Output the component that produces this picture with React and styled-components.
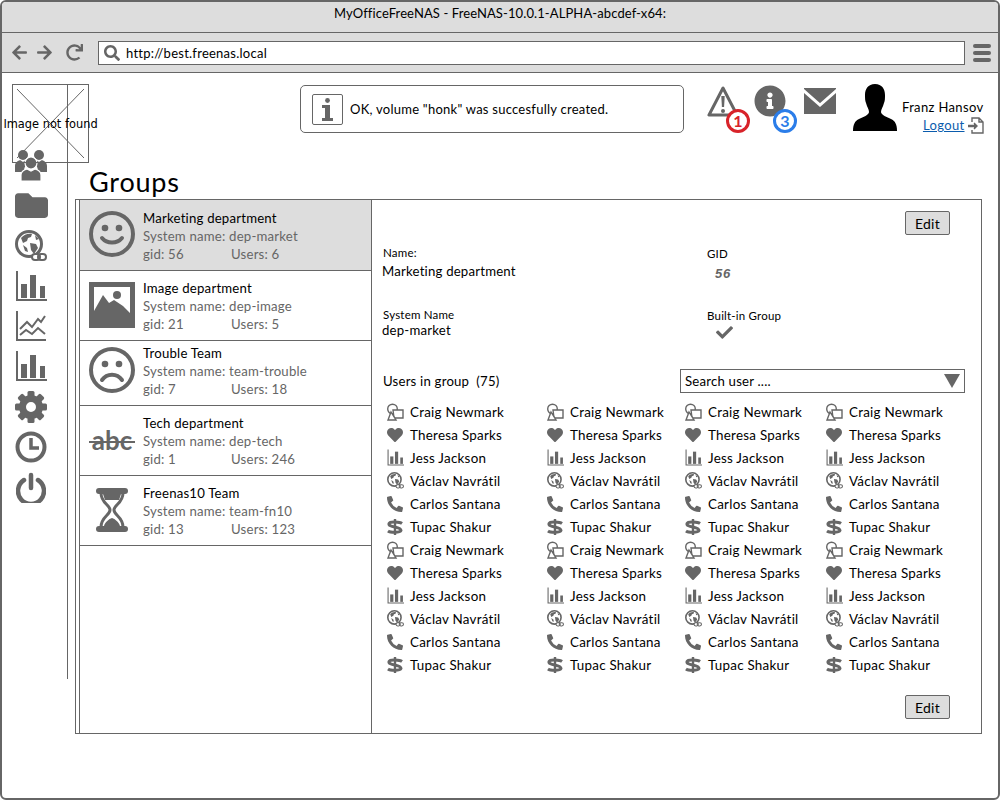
import styled, { createGlobalStyle } from 'styled-components'
import { FaArrowLeft, FaArrowRight, FaCheck, FaFolder, FaHeart, FaInfoCircle, FaPhoneAlt, FaRedo, FaSearch } from 'react-icons/fa'

const GRAY = '#666'
const FONT = '"Lato", "Liberation Sans", sans-serif'

const GlobalStyle = createGlobalStyle`
   html, body {
      margin: 0;
      padding: 0;
      background: #fff;
   }
   body {
      font-family: ${FONT};
      color: #000;
   }
`

const Frame = styled.div`
   box-sizing: border-box;
   width: 1000px;
   height: 800px;
   border: 2px solid ${GRAY};
   border-radius: 6px;
   display: flex;
   flex-direction: column;
   overflow: hidden;
`
const TitleBar = styled.div`
   height: 27px;
   padding-top: 3px;
   background: #ddd;
   border-bottom: 1px solid ${GRAY};
   font-size: 13px;
   letter-spacing: 0.1px;
   line-height: 17px;
   text-align: center;
`
const ToolBar = styled.div`
   height: 39px;
   background: #ddd;
   border-bottom: 1px solid ${GRAY};
   display: flex;
   align-items: center;
   color: ${GRAY};
`
const NavBtn = styled.span`
   display: flex;
   margin-left: ${p => p.$left}px;
   font-size: 17px;
`
const Address = styled.div`
   box-sizing: border-box;
   width: 867px;
   height: 24px;
   margin-left: 15px;
   background: #fff;
   border: 1px solid ${GRAY};
   display: flex;
   align-items: center;
   gap: 6px;
   padding-left: 5px;
   font-size: 13px;
   color: #000;
   letter-spacing: 0.25px;
   svg {
      color: ${GRAY};
      font-size: 16px;
   }
`
const Burger = styled.div`
   margin-left: 8px;
   width: 18px;
   display: flex;
   flex-direction: column;
   gap: 3px;
   i {
      display: block;
      height: 4px;
      border-radius: 2px;
      background: ${GRAY};
   }
`
const Content = styled.div`
   position: relative;
   flex: 1;
   display: flex;
   align-items: flex-start;
`
const Logo = styled.div`
   position: absolute;
   left: 10px;
   top: 11px;
   box-sizing: border-box;
   width: 77px;
   height: 79px;
   border: 1px solid ${GRAY};
   display: flex;
   align-items: center;
   justify-content: center;
   white-space: nowrap;
   font-family: "DejaVu Sans", sans-serif;
   font-size: 11.4px;
   svg {
      position: absolute;
      inset: 4px;
      width: 67px;
      height: 69px;
   }
   span {
      position: relative;
   }
`
const SideBar = styled.nav`
   box-sizing: border-box;
   width: 66px;
   height: 595px;
   margin-top: 11px;
   border-right: 1px solid ${GRAY};
   padding-top: 61px;
   display: grid;
   grid-auto-rows: 40.25px;
   align-content: start;
`
const SideItem = styled.div`
   width: 58px;
   display: flex;
   align-items: center;
   justify-content: center;
   color: ${GRAY};
   font-size: ${p => p.$size || 32}px;
`
const Main = styled.div`
   flex: 1;
   min-width: 0;
`
const Header = styled.header`
   height: 59px;
   padding-top: 12px;
   display: flex;
   align-items: flex-start;
`
const Notice = styled.div`
   box-sizing: border-box;
   width: 384px;
   height: 48px;
   margin-left: 232px;
   border: 1px solid ${GRAY};
   border-radius: 5px;
   display: flex;
   align-items: center;
   gap: 7px;
   padding-left: 11px;
   font-size: 13px;
   letter-spacing: 0.25px;
`
const Badged = styled.div`
   position: relative;
   margin-left: ${p => p.$left}px;
   margin-top: ${p => p.$top || 0}px;
   width: 32px;
   height: 34px;
   color: ${GRAY};
`
const Badge = styled.span`
   position: absolute;
   left: ${p => p.$left}px;
   top: 24px;
   box-sizing: border-box;
   width: 24px;
   height: 24px;
   border-radius: 50%;
   border: 3px solid ${p => p.$color};
   background: #fff;
   color: ${p => p.$color};
   font-size: 16px;
   font-weight: 700;
   line-height: 18px;
   text-align: center;
`
const Avatar = styled.svg`
   margin-left: 16px;
   margin-top: -1px;
   width: 46px;
   height: 47px;
   flex: none;
`
const UserBox = styled.div`
   margin-left: 4px;
   padding-top: 13px;
   white-space: nowrap;
   text-align: right;
   font-size: 13px;
   letter-spacing: 0.35px;
   line-height: 18px;
`
const LogoutRow = styled.div`
   display: flex;
   justify-content: flex-end;
   align-items: center;
   gap: 3px;
   a {
      color: #0b5cad;
      text-decoration: underline;
   }
`
const PageTitle = styled.h1`
   margin: 0 0 0 21px;
   height: 34px;
   padding-top: 21px;
   font-size: 27px;
   font-weight: 400;
   letter-spacing: 0.8px;
   line-height: 34px;
`
const Panel = styled.section`
   box-sizing: border-box;
   width: 907px;
   height: 535px;
   margin-left: 7px;
   border: 1px solid ${GRAY};
   padding-left: 3px;
   display: flex;
`
const GroupList = styled.div`
   box-sizing: border-box;
   width: 293px;
   border-left: 1px solid ${GRAY};
   border-right: 1px solid ${GRAY};
`
const GroupRow = styled.div`
   box-sizing: border-box;
   height: ${p => p.$height}px;
   padding-top: ${p => p.$top}px;
   padding-left: 63px;
   position: relative;
   background: ${p => (p.$active ? '#ddd' : '#fff')};
   border-bottom: 1px solid ${GRAY};
   font-size: 13.2px;
   line-height: 18px;
   letter-spacing: 0.2px;
`
const GroupIcon = styled.div`
   position: absolute;
   left: 9px;
   top: ${p => p.$top}px;
   width: 46px;
   height: 46px;
   display: flex;
   align-items: center;
   justify-content: center;
   color: ${GRAY};
`
const StruckText = styled.span`
   position: relative;
   width: 46px;
   text-align: center;
   font-size: 26px;
   font-weight: 700;
   letter-spacing: 0;
   &::after {
      content: '';
      position: absolute;
      left: 0;
      right: 0;
      top: 50%;
      height: 2px;
      margin-top: 1px;
      background: ${GRAY};
   }
`
const Muted = styled.div`
   color: ${GRAY};
`
const Stats = styled.div`
   display: flex;
   color: ${GRAY};
   span:first-child {
      width: 88px;
   }
`
const Detail = styled.div`
   flex: 1;
   padding: 11px 16px 0 11px;
`
const EditRow = styled.div`
   display: flex;
   justify-content: flex-end;
   padding-right: 15px;
   margin-top: ${p => p.$top || 0}px;
`
const EditBtn = styled.button`
   box-sizing: border-box;
   width: 45px;
   height: 24px;
   padding: 0;
   background: #ddd;
   border: 1px solid ${GRAY};
   border-radius: 2px;
   font-family: ${FONT};
   font-size: 14px;
   letter-spacing: 0.3px;
   color: #000;
`
const Fields = styled.div`
   display: grid;
   grid-template-columns: 324px 1fr;
   grid-auto-rows: 62px;
   margin-top: 11px;
`
const Field = styled.div`
   padding-top: ${p => p.$top || 0}px;
   font-size: 13.2px;
   letter-spacing: 0.2px;
`
const FieldLabel = styled.div`
   font-size: 11.5px;
   line-height: 14px;
   letter-spacing: 0.2px;
`
const FieldValue = styled.div`
   line-height: 19px;
   margin-left: -1px;
   margin-top: ${p => p.$top || 0}px;
`
const GidValue = styled.div`
   margin: 5px 0 0 8px;
   font-family: "Liberation Sans", sans-serif;
   font-style: italic;
   font-weight: 700;
   font-size: 13px;
   letter-spacing: 0.8px;
   color: ${GRAY};
`
const CheckMark = styled.div`
   margin: 1px 0 0 9px;
   font-size: 17px;
   color: ${GRAY};
   line-height: 18px;
`
const UsersHead = styled.div`
   display: flex;
   align-items: center;
   justify-content: space-between;
   margin-top: -1px;
   font-size: 13.2px;
   letter-spacing: 0.2px;
`
const Search = styled.div`
   box-sizing: border-box;
   width: 285px;
   height: 24px;
   border: 1px solid ${GRAY};
   display: flex;
   align-items: center;
   justify-content: space-between;
   padding: 0 4px;
`
const Arrow = styled.i`
   width: 0;
   height: 0;
   border-left: 8px solid transparent;
   border-right: 8px solid transparent;
   border-top: 14px solid ${GRAY};
`
const UserGrid = styled.div`
   display: grid;
   grid-template-columns: 160px 138px 141px 1fr;
   grid-auto-rows: 23px;
   margin: 7px 0 0 3px;
`
const UserCell = styled.div`
   display: flex;
   align-items: center;
   gap: 6px;
   font-size: 13.4px;
   letter-spacing: 0.25px;
   white-space: nowrap;
`
const UserIcon = styled.span`
   width: 18px;
   height: 18px;
   display: flex;
   align-items: center;
   justify-content: center;
   color: ${GRAY};
   font-size: 16px;
`

const People = () => (
   <svg width="32" height="33" viewBox="0 0 32 33" fill="currentColor">
      <circle cx="8" cy="6" r="5" />
      <circle cx="24" cy="6" r="5" />
      <path d="M0 23v-6c0-4 3-5 5-6l3 2 3-2 3 2c-3 2-5 5-5 10zM32 23v-6c0-4-3-5-5-6l-3 2-3-2-3 2c3 2 5 5 5 10z" />
      <circle cx="16" cy="14" r="6" stroke="#fff" strokeWidth="1.2" />
      <path stroke="#fff" strokeWidth="1.2" d="M6 32v-6c0-4 3-5 6-6l4 2 4-2c3 1 6 2 6 6v6z" />
   </svg>
)
const Bars = ({ size = 32 }) => (
   <svg width={size} height={size} viewBox="0 0 32 32" fill="currentColor">
      <path d="M1 1h2v28h29v2H1z" />
      <rect x="6" y="14" width="6" height="14" />
      <rect x="15" y="5" width="6" height="23" />
      <rect x="25" y="16" width="5" height="12" />
   </svg>
)
const LineChart = () => (
   <svg width="32" height="32" viewBox="0 0 32 32" fill="none" stroke="currentColor" strokeWidth="2">
      <path d="M2 1v29h29" />
      <path d="M5 19l7-7 5 5 6-8 3 3 4-6M5 25l6-5 6 4 6-6 7 6" />
   </svg>
)
const Globe = ({ size = 32 }) => (
   <svg width={size} height={size} viewBox="0 0 32 32">
      <circle cx="14" cy="14" r="12.5" fill="none" stroke="currentColor" strokeWidth="3" />
      <path fill="currentColor" d="M6 8c3-4 8-5 11-4l-1 3-3 1-1 3-4 2zM15 13l6 1 2 4-4 6-3-4zM8 15l4 3 1 4-3-1zM20 5l4 4-3 1z" />
      <rect x="17" y="24" width="8" height="6" rx="3" fill="#fff" stroke="currentColor" strokeWidth="2" />
      <rect x="23" y="24" width="8" height="6" rx="3" fill="none" stroke="currentColor" strokeWidth="2" />
   </svg>
)
const Gear = () => (
   <svg width="32" height="32" viewBox="0 0 32 32" fill="currentColor">
      {[0, 45, 90, 135, 180, 225, 270, 315].map(a => (
         <rect key={a} x="12.500" y="0" width="7" height="8" rx="1.500" transform={`rotate(${a} 16 16)`} />
      ))}
      <circle cx="16" cy="16" r="8.500" fill="none" stroke="currentColor" strokeWidth="7" />
   </svg>
)
const Clock = () => (
   <svg width="32" height="32" viewBox="0 0 32 32" fill="none" stroke="currentColor" strokeWidth="4">
      <circle cx="16" cy="16" r="13.500" />
      <path d="M16 7v10h8" strokeWidth="3.500" />
   </svg>
)
const Power = () => (
   <svg width="30" height="31" viewBox="0 0 30 31" fill="none" stroke="currentColor" strokeWidth="4.500" strokeLinecap="round">
      <path d="M8 8a13 13 0 1 0 14 0" />
      <path d="M15 3v13" />
   </svg>
)
const Face = ({ sad }) => (
   <svg width="46" height="46" viewBox="0 0 46 46" fill="none" stroke="currentColor" strokeWidth="4">
      <circle cx="23" cy="23" r="21" />
      <circle cx="16" cy="17" r="3.300" fill="currentColor" stroke="none" />
      <circle cx="30" cy="17" r="3.300" fill="currentColor" stroke="none" />
      <path strokeLinecap="round" d={sad ? 'M13 33c5-7 15-7 20 0' : 'M13 27c5 6 15 6 20 0'} />
   </svg>
)
const Picture = () => (
   <svg width="46" height="46" viewBox="0 0 46 46">
      <path fill="currentColor" d="M0 0h46v46H0z" />
      <path fill="#fff" d="M5 5h36v27H5z" />
      <circle cx="28" cy="13" r="4" fill="currentColor" />
      <path fill="currentColor" d="M5 29l9-16 6 8 5-3 9 6 7 7v9H5z" />
   </svg>
)
const Hourglass = () => (
   <svg width="34" height="46" viewBox="0 0 34 46" fill="currentColor">
      <rect x="1" y="1" width="32" height="6" rx="3" />
      <rect x="1" y="39" width="32" height="6" rx="3" />
      <path fill="none" stroke="currentColor" strokeWidth="3" d="M6 6c0 10 9 12 9 17S6 30 6 40M28 6c0 10-9 12-9 17s9 7 9 17" />
      <path d="M8 7h18l-2 6H10zM9 39c1-4 5-7 8-8 3 1 7 4 8 8z" />
   </svg>
)
const Warning = () => (
   <svg width="32" height="33" viewBox="0 0 32 33">
      <path d="M16 3L2 30h28z" fill="none" stroke="currentColor" strokeWidth="3" strokeLinejoin="round" />
      <path d="M14.300 11h3.400l-.6 11h-2.200z" fill="currentColor" />
      <circle cx="16" cy="26" r="2" fill="currentColor" />
   </svg>
)
const Mail = () => (
   <svg width="32" height="26" viewBox="0 0 32 26">
      <path fill="currentColor" d="M0 0h32v26H0z" />
      <path fill="none" stroke="#fff" strokeWidth="3" d="M-1 2l17 15L33 2" />
   </svg>
)
const Person = () => (
   <Avatar viewBox="0 0 46 47">
      <path fill="#000" d="M23 0c7 0 10 5 10 11 0 3 0 6-1 8-1 4-3 6-3 9 0 3 6 5 10 7 4 2 6 5 6 12H1c0-7 2-10 6-12 4-2 10-4 10-7 0-3-2-5-3-9-1-2-1-5-1-8 0-6 3-11 10-11z" />
   </Avatar>
)
const LogoutIcon = () => (
   <svg width="16" height="17" viewBox="0 0 16 17" fill="none" stroke={GRAY} strokeWidth="1.400">
      <path d="M4 5V1h7l4 4v11H4v-3M11 1v4h4" />
      <path d="M0 9h7" strokeWidth="2.400" />
      <path d="M6 6l3 3-3 3" fill={GRAY} />
   </svg>
)
const NoticeIcon = () => (
   <svg width="31" height="31" viewBox="0 0 31 31">
      <rect x=".5" y=".5" width="30" height="30" rx="1.500" fill="#fff" stroke={GRAY} />
      <circle cx="15.500" cy="6.500" r="2.400" fill={GRAY} />
      <path fill={GRAY} d="M10 11h8v13h3v3H10v-3h3V14h-3z" />
   </svg>
)
const Shapes = () => (
   <svg width="18" height="18" viewBox="0 0 18 18" fill="none" stroke="currentColor" strokeWidth="1.400">
      <circle cx="6.500" cy="6" r="4.800" />
      <path d="M7 7h10v8H8z" fill="#fff" />
      <path d="M5 9l-3 8h8z" fill="#fff" />
   </svg>
)
const Dollar = () => (
   <svg width="18" height="16" viewBox="0 0 18 16" fill="none" stroke="currentColor">
      <path strokeWidth="3" d="M16 4.500C14 3 4 2 3 4.500c-1 4 12 3 12 7-1 2.500-11 2-13 .5" />
      <path strokeWidth="2.400" d="M9 0v16" />
   </svg>
)

const sideIcons = [
   { icon: <People /> },
   { icon: <FaFolder />, size: 33 },
   { icon: <Globe /> },
   { icon: <Bars /> },
   { icon: <LineChart /> },
   { icon: <Bars /> },
   { icon: <Gear /> },
   { icon: <Clock /> },
   { icon: <Power /> },
]

const groups = [
   { name: 'Marketing department', sys: 'dep-market', gid: 56, users: 6, height: 71, top: 9, iconTop: 11, icon: <Face />, active: true },
   { name: 'Image department', sys: 'dep-image', gid: 21, users: 5, height: 70, top: 8, iconTop: 11, icon: <Picture /> },
   { name: 'Trouble Team', sys: 'team-trouble', gid: 7, users: 18, height: 65, top: 3, iconTop: 6, icon: <Face sad /> },
   { name: 'Tech department', sys: 'dep-tech', gid: 1, users: 246, height: 70, top: 8, iconTop: 11, icon: <StruckText>abc</StruckText> },
   { name: 'Freenas10 Team', sys: 'team-fn10', gid: 13, users: 123, height: 70, top: 8, iconTop: 11, icon: <Hourglass /> },
]

const people = [
   { name: 'Craig Newmark', icon: <Shapes /> },
   { name: 'Theresa Sparks', icon: <FaHeart /> },
   { name: 'Jess Jackson', icon: <Bars size={17} /> },
   { name: 'Václav Navrátil', icon: <Globe size={17} /> },
   { name: 'Carlos Santana', icon: <FaPhoneAlt /> },
   { name: 'Tupac Shakur', icon: <Dollar /> },
]

const userRows = [...people, ...people].flatMap(p => [p, p, p, p])

const App = () => {
   return (
      <Frame>
         <GlobalStyle />
         <TitleBar>MyOfficeFreeNAS - FreeNAS-10.0.1-ALPHA-abcdef-x64:</TitleBar>
         <ToolBar>
            <NavBtn $left={9}><FaArrowLeft /></NavBtn>
            <NavBtn $left={8}><FaArrowRight /></NavBtn>
            <NavBtn $left={13}><FaRedo /></NavBtn>
            <Address><FaSearch />http://best.freenas.local</Address>
            <Burger><i /><i /><i /></Burger>
         </ToolBar>
         <Content>
            <Logo>
               <svg viewBox="0 0 67 69" stroke={GRAY} strokeWidth="1">
                  <path d="M0 0l67 69M67 0L0 69" />
               </svg>
               <span>Image not found</span>
            </Logo>
            <SideBar>
               {sideIcons.map((item, i) => (
                  <SideItem key={i} $size={item.size}>{item.icon}</SideItem>
               ))}
            </SideBar>
            <Main>
               <Header>
                  <Notice>
                     <NoticeIcon />
                     OK, volume "honk" was succesfully created.
                  </Notice>
                  <Badged $left={23}>
                     <Warning />
                     <Badge $left={19} $color="#d8232a">1</Badge>
                  </Badged>
                  <Badged $left={15}>
                     <FaInfoCircle size={32} />
                     <Badge $left={19} $color="#2b7de9">3</Badge>
                  </Badged>
                  <Badged $left={18} $top={3}>
                     <Mail />
                  </Badged>
                  <Person />
                  <UserBox>
                     Franz Hansov
                     <LogoutRow>
                        <a href="#logout">Logout</a>
                        <LogoutIcon />
                     </LogoutRow>
                  </UserBox>
               </Header>
               <PageTitle>Groups</PageTitle>
               <Panel>
                  <GroupList>
                     {groups.map(g => (
                        <GroupRow key={g.name} $height={g.height} $top={g.top} $active={g.active}>
                           <GroupIcon $top={g.iconTop}>{g.icon}</GroupIcon>
                           <div>{g.name}</div>
                           <Muted>System name: {g.sys}</Muted>
                           <Stats>
                              <span>gid: {g.gid}</span>
                              <span>Users: {g.users}</span>
                           </Stats>
                        </GroupRow>
                     ))}
                  </GroupList>
                  <Detail>
                     <EditRow><EditBtn>Edit</EditBtn></EditRow>
                     <Fields>
                        <Field>
                           <FieldLabel>Name:</FieldLabel>
                           <FieldValue $top={2}>Marketing department</FieldValue>
                        </Field>
                        <Field $top={1}>
                           <FieldLabel>GID</FieldLabel>
                           <GidValue>56</GidValue>
                        </Field>
                        <Field>
                           <FieldLabel>System Name</FieldLabel>
                           <FieldValue $top={-1}>dep-market</FieldValue>
                        </Field>
                        <Field $top={1}>
                           <FieldLabel>Built-in Group</FieldLabel>
                           <CheckMark><FaCheck /></CheckMark>
                        </Field>
                     </Fields>
                     <UsersHead>
                        <span>Users in group&nbsp; (75)</span>
                        <Search>
                           <span>Search user ....</span>
                           <Arrow />
                        </Search>
                     </UsersHead>
                     <UserGrid>
                        {userRows.map((p, i) => (
                           <UserCell key={i}>
                              <UserIcon>{p.icon}</UserIcon>
                              {p.name}
                           </UserCell>
                        ))}
                     </UserGrid>
                     <EditRow $top={19}><EditBtn>Edit</EditBtn></EditRow>
                  </Detail>
               </Panel>
            </Main>
         </Content>
      </Frame>
   )
}

export default App
